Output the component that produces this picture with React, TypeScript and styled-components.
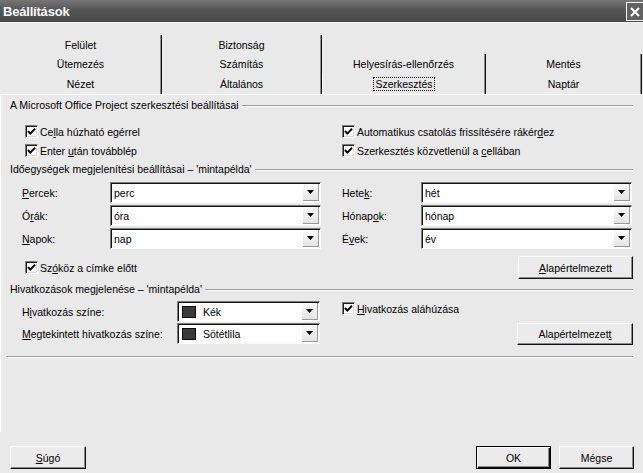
import styled, { createGlobalStyle } from "styled-components";

const GlobalStyle = createGlobalStyle`
  html, body {
    margin: 0;
    padding: 0;
    background: #e9e9e9;
  }
  body {
    font-family: "Liberation Sans", Arial, sans-serif;
    font-size: 10.5px;
    color: #000;
  }
`;

const Dialog = styled.div`
  width: 643px;
  height: 473px;
  display: flex;
  flex-direction: column;
  overflow: hidden;
  background: #e9e9e9;
`;

const TitleBar = styled.div`
  height: 22px;
  flex: none;
  display: flex;
  align-items: center;
  padding-left: 3px;
  background: linear-gradient(#757575, #555 45%, #484848);
  color: #fff;
  font-weight: bold;
  font-size: 13px;
  letter-spacing: -0.2px;
`;

const CloseButton = styled.div`
  margin-left: auto;
  width: 16px;
  height: 17px;
  margin-top: 1px;
  border: 1px solid #f4f4f4;
  border-right: none;
  background: #626262;
  display: flex;
  align-items: center;
  justify-content: center;
`;

const Body = styled.div`
  flex: 1;
  display: flex;
  flex-direction: column;
  padding-top: 12px;
  border-top: 1px solid #f6f6f6;
`;

const TabRow = styled.div`
  display: flex;
`;

const Tab = styled.div<{ $w: number; $h?: number; $selected?: boolean }>`
  width: ${(p) => p.$w}px;
  height: ${(p) => p.$h ?? 19}px;
  box-sizing: border-box;
  display: flex;
  align-items: center;
  justify-content: center;
  border-right: 1px solid #111;
  box-shadow: inset -1px 0 #8c8c8c;
  border-left: ${(p) => (p.$selected ? "1px solid #fff" : "none")};
`;

const FocusLabel = styled.span`
  outline: 1px dotted #000;
  outline-offset: 0;
  padding: 0 1px;
`;

const Panel = styled.div`
  height: 338px;
  box-sizing: border-box;
  border-top: 1px solid #fff;
  border-left: 1px solid #fff;
  padding: 1px 10px 0 9px;
  display: flex;
  flex-direction: column;
`;

const GroupHeader = styled.div<{ $top: number }>`
  height: 14px;
  line-height: 14px;
  margin-top: ${(p) => p.$top}px;
  display: flex;
  align-items: center;
  gap: 3px;
  white-space: nowrap;
  &::after {
    content: "";
    flex: 1;
    height: 0;
    border-top: 1px solid #9a9a9a;
    border-bottom: 1px solid #fff;
    margin-top: 1px;
  }
`;

const CheckGrid = styled.div`
  margin-top: 10px;
  padding-left: 15px;
  display: grid;
  grid-template-columns: 317px 1fr;
  grid-template-rows: 19px 19px;
`;

const CheckItem = styled.label<{ $offset?: number }>`
  display: flex;
  align-items: center;
  gap: 2px;
  height: 19px;
  margin-top: ${(p) => p.$offset ?? 0}px;
  white-space: nowrap;
`;

const Box = styled.span`
  width: 13px;
  height: 13px;
  box-sizing: border-box;
  background: #fff;
  border-top: 1px solid #7c7c7c;
  border-left: 1px solid #7c7c7c;
  border-right: 1px solid #fff;
  border-bottom: 1px solid #fff;
  box-shadow: inset 1px 1px #1c1c1c, inset -1px -1px #d8d8d8;
  display: flex;
  align-items: center;
  justify-content: center;
  flex: none;
`;

const FieldGrid = styled.div`
  margin-top: 6px;
  padding-left: 12px;
  display: grid;
  grid-template-columns: 88px 211px 21px 79px 211px;
  grid-auto-rows: 21px;
  row-gap: 2px;
`;

const FieldLabel = styled.div`
  display: flex;
  align-items: center;
  white-space: nowrap;
`;

const SelectBox = styled.div<{ $w?: number }>`
  width: ${(p) => (p.$w ? `${p.$w}px` : "auto")};
  height: 21px;
  box-sizing: border-box;
  background: #fff;
  border-top: 1px solid #7a7a7a;
  border-left: 1px solid #7a7a7a;
  border-right: 1px solid #fafafa;
  border-bottom: 1px solid #fafafa;
  box-shadow: inset 1px 1px #141414;
  display: flex;
  align-items: center;
  padding-left: 3px;
`;

const SelectText = styled.span`
  flex: 1;
  white-space: nowrap;
`;

const Swatch = styled.span`
  width: 14px;
  height: 12px;
  box-sizing: border-box;
  background: #3a3a3a;
  border: 1px solid #0c0c0c;
  margin: 0 7px 0 1px;
  flex: none;
`;

const DropButton = styled.span`
  width: 16px;
  height: 17px;
  margin: 1px 1px 1px 0;
  box-sizing: border-box;
  background: linear-gradient(#fbfbfb, #e4e4e4);
  border-right: 1px solid #9a9a9a;
  border-bottom: 1px solid #9a9a9a;
  display: flex;
  align-items: center;
  justify-content: center;
  flex: none;
`;

const OptionRow = styled.div`
  margin-top: 6px;
  height: 25px;
  padding-left: 15px;
  display: flex;
  align-items: center;
  justify-content: space-between;
`;

const LinkGrid = styled.div`
  margin-top: 5px;
  padding-left: 12px;
  display: grid;
  grid-template-columns: 155px 143px 1fr;
  grid-auto-rows: 21px;
  row-gap: 1px;
`;

const LinkRight = styled.div`
  padding-left: 22px;
  display: flex;
  align-items: flex-start;
  justify-content: flex-end;
`;

const Separator = styled.div`
  margin: 12px 0 0 -4px;
  border-top: 1px solid #a0a0a0;
  border-bottom: 1px solid #fff;
`;

const Button = styled.div<{ $w: number; $h?: number; $default?: boolean }>`
  width: ${(p) => p.$w}px;
  height: ${(p) => p.$h ?? 23}px;
  box-sizing: border-box;
  display: flex;
  align-items: center;
  justify-content: center;
  background: #ebebeb;
  border: 1px solid;
  border-color: ${(p) => (p.$default ? "#000" : "#fdfdfd #111 #111 #fdfdfd")};
  box-shadow: ${(p) =>
    p.$default
      ? "inset 1px 1px #fdfdfd, inset -1px -1px #111, inset -2px -2px #8a8a8a"
      : "inset -1px -1px #8a8a8a"};
  white-space: nowrap;
  flex: none;
`;

const BottomBar = styled.div`
  padding: 14px 9px 0 10px;
  display: flex;
  align-items: center;
  gap: 8px;
`;

const Spacer = styled.div`
  flex: 1;
`;

const Check = () => (
  <svg width="9" height="9" viewBox="0 0 9 9">
    <polyline points="1,4 3.3,6.6 8,1.8" fill="none" stroke="#000" strokeWidth="2" />
  </svg>
);

const Arrow = () => (
  <svg width="7" height="4" viewBox="0 0 7 4">
    <polygon points="0,0 7,0 3.5,4" fill="#000" />
  </svg>
);

const CheckBox = ({ children, offset }: { children: React.ReactNode; offset?: number }) => (
  <CheckItem $offset={offset}>
    <Box>
      <Check />
    </Box>
    <span>{children}</span>
  </CheckItem>
);

const Select = ({ value, width, swatch }: { value: string; width?: number; swatch?: boolean }) => (
  <SelectBox $w={width}>
    {swatch && <Swatch />}
    <SelectText>{value}</SelectText>
    <DropButton>
      <Arrow />
    </DropButton>
  </SelectBox>
);

const App = () => {
  return (
    <Dialog>
      <GlobalStyle />
      <TitleBar>
        Beállítások
        <CloseButton>
          <svg width="10" height="10" viewBox="0 0 10 10">
            <path d="M1 1 L9 9 M9 1 L1 9" stroke="#fff" strokeWidth="2" />
          </svg>
        </CloseButton>
      </TitleBar>
      <Body>
        <TabRow>
          <Tab $w={162}>Felület</Tab>
          <Tab $w={160}>Biztonság</Tab>
        </TabRow>
        <TabRow>
          <Tab $w={162}>Ütemezés</Tab>
          <Tab $w={160}>Számítás</Tab>
          <Tab $w={164}>Helyesírás-ellenőrzés</Tab>
          <Tab $w={156}>Mentés</Tab>
        </TabRow>
        <TabRow>
          <Tab $w={162} $h={21}>Nézet</Tab>
          <Tab $w={160} $h={21}>Általános</Tab>
          <Tab $w={164} $h={21} $selected>
            <FocusLabel>Szerkesztés</FocusLabel>
          </Tab>
          <Tab $w={156} $h={21}>Naptár</Tab>
        </TabRow>

        <Panel>
          <GroupHeader $top={2}>A Microsoft Office Project szerkesztési beállításai</GroupHeader>
          <CheckGrid>
            <CheckBox>
              Ce<u>l</u>la húzható egérrel
            </CheckBox>
            <CheckBox>
              Automatikus csatolás frissítésére rákér<u>d</u>ez
            </CheckBox>
            <CheckBox>
              Enter <u>u</u>tán továbblép
            </CheckBox>
            <CheckBox>
              Szerkesztés közvetlenül a <u>c</u>ellában
            </CheckBox>
          </CheckGrid>

          <GroupHeader $top={2}>Időegységek megjelenítési beállításai – 'mintapélda'</GroupHeader>
          <FieldGrid>
            <FieldLabel>
              <u>P</u>ercek:
            </FieldLabel>
            <Select value="perc" />
            <div />
            <FieldLabel>
              Hete<u>k</u>:
            </FieldLabel>
            <Select value="hét" />

            <FieldLabel>
              Ó<u>r</u>ák:
            </FieldLabel>
            <Select value="óra" />
            <div />
            <FieldLabel>
              Hónap<u>o</u>k:
            </FieldLabel>
            <Select value="hónap" />

            <FieldLabel>
              <u>N</u>apok:
            </FieldLabel>
            <Select value="nap" />
            <div />
            <FieldLabel>
              É<u>v</u>ek:
            </FieldLabel>
            <Select value="év" />
          </FieldGrid>
          <OptionRow>
            <CheckBox>
              Sz<u>ó</u>köz a címke előtt
            </CheckBox>
            <Button $w={115}>
              <u>A</u>lapértelmezett
            </Button>
          </OptionRow>

          <GroupHeader $top={2}>Hivatkozások megjelenése – 'mintapélda'</GroupHeader>
          <LinkGrid>
            <FieldLabel>
              H<u>i</u>vatkozás színe:
            </FieldLabel>
            <Select value="Kék" width={143} swatch />
            <LinkRight>
              <CheckBox offset={-2}>
                <u>H</u>ivatkozás aláhúzása
              </CheckBox>
              <Spacer />
            </LinkRight>

            <FieldLabel>
              <u>M</u>egtekintett hivatkozás színe:
            </FieldLabel>
            <Select value="Sötétlila" width={143} swatch />
            <LinkRight>
              <Button $w={116} $h={22}>
                Alapértelmezet<u>t</u>
              </Button>
            </LinkRight>
          </LinkGrid>
          <Separator />
        </Panel>

        <BottomBar>
          <Button $w={76}>
            <u>S</u>úgó
          </Button>
          <Spacer />
          <Button $w={75} $default>
            OK
          </Button>
          <Button $w={75}>Mégse</Button>
        </BottomBar>
      </Body>
    </Dialog>
  );
};

export default App;
